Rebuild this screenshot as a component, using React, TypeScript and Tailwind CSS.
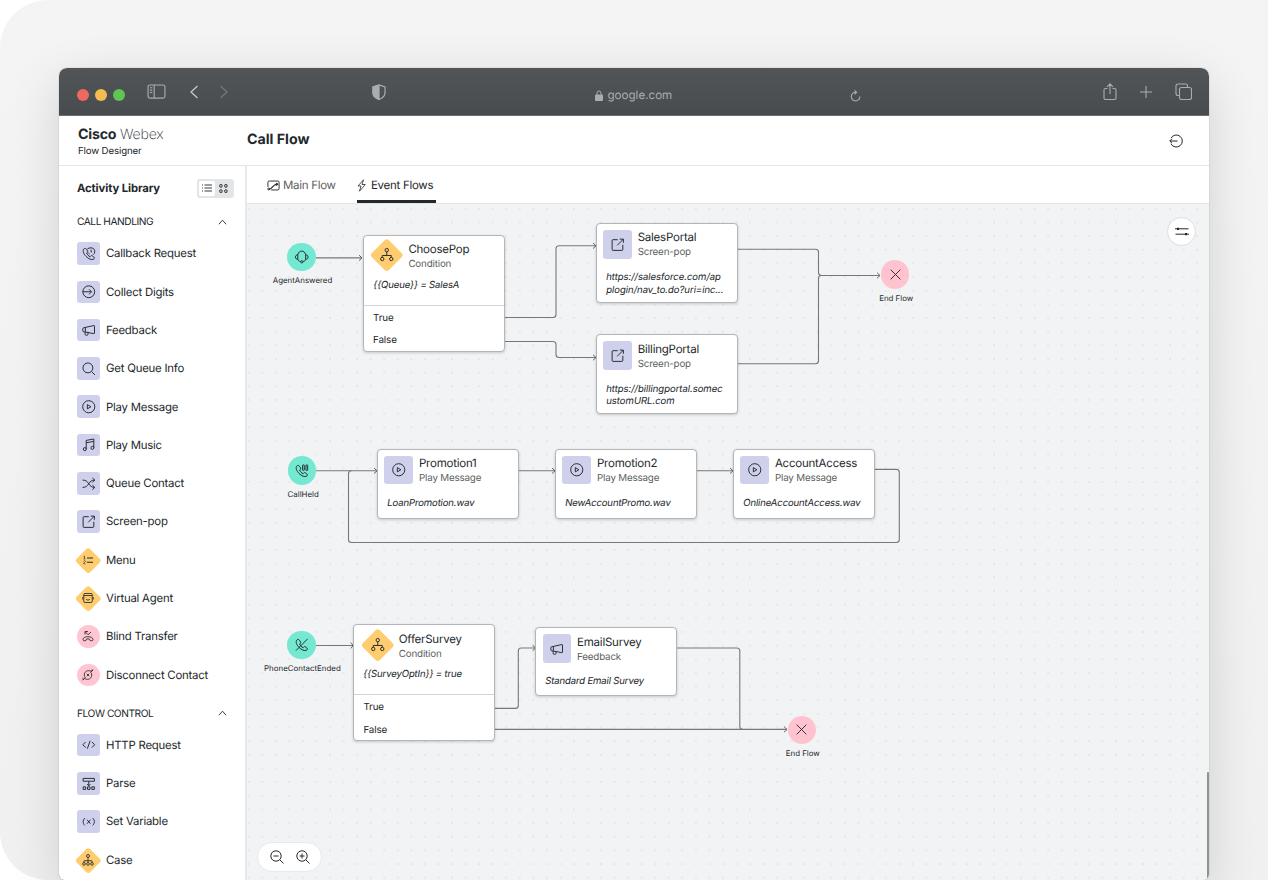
import type { ReactNode } from "react";
import clsx from "clsx";

type Tone = "lavender" | "amber" | "rose" | "mint";

const handset =
  "M3.2 3.6C.8 6.5 2.6 12 7 16.6c4.5 4.6 10 6.8 13.2 5.2 2.2-1.1 2.4-2.9 1-4l-2.7-2c-1.2-.9-2.5-.6-3.3.5l-.7 1c-2.8-1.2-5.1-3.6-6.2-6.5l1-.8c1-.8 1.2-2 .5-3.1L8 4C6.8 2.3 4.8 1.9 3.2 3.6z";

const icons: Record<string, ReactNode> = {
  callback: (
    <>
      <path d={handset} />
      <path d="M9.5 3.5C13 .6 19 .8 21.5 4c2 3 1.6 7.5-1.5 9.5M13.5 12.5c-1.2-.6-2-1.3-2.6-2.5M16 4.8v3.4l2 1" />
    </>
  ),
  digits: (
    <>
      <circle cx="12" cy="12" r="10.5" />
      <path d="M1.5 12H16.5M12.5 7.5l4.5 4.5-4.5 4.5" />
    </>
  ),
  feedback: (
    <path d="M3 8.5 21 4.5a1 1 0 0 1 1.2 1v12.4a1 1 0 0 1-1.2 1L3 15.5a1.5 1.5 0 0 1-1.5-1.5v-4A1.5 1.5 0 0 1 3 8.5zM5.5 16v3.2a2.6 2.6 0 0 0 5.2.5V17M6 8v7.5" />
  ),
  search: (
    <>
      <circle cx="10.5" cy="10.5" r="8.8" />
      <path d="m17 17 6 6" />
    </>
  ),
  play: (
    <>
      <circle cx="12" cy="12" r="10.8" />
      <path d="M9.5 8.2v7.6l6.3-3.8z" />
    </>
  ),
  music: (
    <>
      <path d="M7.5 19.5V4.2L21 1.8v15.4M7.5 8.5 21 6" />
      <ellipse cx="5" cy="19.8" rx="2.6" ry="2.8" />
      <ellipse cx="18.5" cy="17.5" rx="2.6" ry="2.8" />
    </>
  ),
  shuffle: (
    <path d="M1 5.5c6 0 8.5 2.5 11 6.5s5 6.5 10.5 6.5M1 18.5c6 0 8.5-2.5 11-6.5s5-6.5 10.5-6.5M18.5 1.5l4.3 4-4.3 4M18.5 14.5l4.3 4-4.3 4" />
  ),
  popout: (
    <path d="M12 3H3.5A1.5 1.5 0 0 0 2 4.5v16A1.5 1.5 0 0 0 3.5 22h16a1.5 1.5 0 0 0 1.5-1.5V12M11 13 22 2M15.5 2H22v6.5" />
  ),
  menu: (
    <>
      <path d="M10 8h12M10 16.5h12" strokeWidth="2.2" />
      <path d="M3 5.5 5 4v6M3 10h4M3 15c.5-2 4-2 4 0 0 1.5-4 2.5-4 4.5h4" strokeWidth="1.2" />
    </>
  ),
  bot: (
    <>
      <rect x="3.5" y="3" width="17" height="18" rx="2.5" />
      <path d="M3.5 7H20.5M1.5 10v5M22.5 10v5M8 14c1.5 3 6.5 3 8 0M8 10.5v.8M16 10.5v.8" />
    </>
  ),
  transfer: (
    <>
      <path d="M6 9V3h6M6.5 3.5l5.5 6 6-5.5" />
      <path d="M2 19.5c0-5 5-6 10-6s10 1 10 6c0 1.2-1 2-2.2 2h-2.5c-1.3 0-2-.8-2-2v-1.3c-2-.6-4.6-.6-6.6 0v1.3c0 1.2-.7 2-2 2H4.2c-1.2 0-2.2-.8-2.2-2z" />
    </>
  ),
  disconnect: (
    <>
      <path d="M18 4.5C12 1.5 4.5 4.5 4.5 12c0 2 .5 3.5 1.5 5M6 19.5C12 22.5 19.5 19.5 19.5 12c0-2-.5-3.5-1.5-5" />
      <path d="M22.5 1.5 17 7M1.5 22.5 7 17M9.5 9.5l5 5M14.5 9.5l-5 5M18 2.5h4M2 17.5v4" />
    </>
  ),
  code: <path d="M6.5 7 1.5 12l5 5M17.5 7l5 5-5 5M14.5 5l-5 14" />,
  parse: (
    <>
      <rect x="2" y="2.5" width="20" height="5" />
      <path d="M12 7.5v8M9 12.5l3 3 3-3" />
      <rect x="2" y="17.5" width="4.5" height="4.5" />
      <rect x="9.8" y="17.5" width="4.5" height="4.5" />
      <rect x="17.5" y="17.5" width="4.5" height="4.5" />
    </>
  ),
  variable: (
    <path d="M5 5.5c-4 3.8-4 9.2 0 13M19 5.5c4 3.8 4 9.2 0 13M9 8.5l6 7M15 8.5l-6 7" />
  ),
  caseTree: (
    <>
      <circle cx="12" cy="4" r="3" />
      <path d="M12 7v10M4 17v-3.5h16V17" />
      <circle cx="4" cy="19.8" r="2.7" />
      <circle cx="12" cy="19.8" r="2.7" />
      <circle cx="20" cy="19.8" r="2.7" />
    </>
  ),
  condition: (
    <>
      <circle cx="12" cy="3.8" r="3" />
      <path d="M12 6.8v6.5M4 16.5v-3.2h16v3.2" />
      <circle cx="4" cy="19.5" r="3" />
      <circle cx="20" cy="19.5" r="3" />
    </>
  ),
  headset: (
    <>
      <path d="M5 8.5C6 4 8.5 2 12 2s6 2 7 6.5M5 8.5v8C2.5 16.5.8 15 .8 12.5S2.5 8.5 5 8.5M19 8.5v8c2.5 0 4.2-1.5 4.2-4s-1.7-4-4.2-4M5 16.5c.5 2 2 3.5 4.5 4M19 16.5c-.5 2-2 3.5-4.5 4" />
      <circle cx="12" cy="21" r="2" />
    </>
  ),
  held: (
    <>
      <path d={handset} />
      <rect x="13.5" y="1.5" width="3" height="10" rx="1" />
      <rect x="19.5" y="1.5" width="3" height="10" rx="1" />
    </>
  ),
  ended: (
    <>
      <path d={handset} />
      <path d="M22.5 1.5 1.5 22.5" />
    </>
  ),
  close: <path d="m3 3 18 18M21 3 3 21" />,
};

function Icon({ name, className }: { name: string; className?: string }) {
  return (
    <svg
      viewBox="0 0 24 24"
      fill="none"
      stroke="currentColor"
      strokeWidth="1.7"
      strokeLinejoin="round"
      overflow="visible"
      className={clsx("relative shrink-0", className)}
    >
      {icons[name]}
    </svg>
  );
}

interface Activity {
  label: string;
  icon: string;
  tone: Tone;
}

const callHandling: Activity[] = [
  { label: "Callback Request", icon: "callback", tone: "lavender" },
  { label: "Collect Digits", icon: "digits", tone: "lavender" },
  { label: "Feedback", icon: "feedback", tone: "lavender" },
  { label: "Get Queue Info", icon: "search", tone: "lavender" },
  { label: "Play Message", icon: "play", tone: "lavender" },
  { label: "Play Music", icon: "music", tone: "lavender" },
  { label: "Queue Contact", icon: "shuffle", tone: "lavender" },
  { label: "Screen-pop", icon: "popout", tone: "lavender" },
  { label: "Menu", icon: "menu", tone: "amber" },
  { label: "Virtual Agent", icon: "bot", tone: "amber" },
  { label: "Blind Transfer", icon: "transfer", tone: "rose" },
  { label: "Disconnect Contact", icon: "disconnect", tone: "rose" },
];

const flowControl: Activity[] = [
  { label: "HTTP Request", icon: "code", tone: "lavender" },
  { label: "Parse", icon: "parse", tone: "lavender" },
  { label: "Set Variable", icon: "variable", tone: "lavender" },
  { label: "Case", icon: "caseTree", tone: "amber" },
];

function ActivityBadge({ icon, tone }: { icon: string; tone: Tone }) {
  return (
    <span
      className={clsx(
        "grid size-[22.5px] shrink-0 place-items-center",
        tone === "lavender" && "rounded-[3px] bg-[#cfd1ec]",
        tone === "rose" && "rounded-full bg-[#ffc6d2]",
      )}
    >
      {tone === "amber" && (
        <span className="col-start-1 row-start-1 size-[18.5px] rotate-45 rounded-[3px] bg-[#ffcd70]" />
      )}
      <Icon
        name={icon}
        className={clsx(
          "col-start-1 row-start-1",
          tone === "lavender" ? "size-[13.5px]" : "size-[12px]",
        )}
      />
    </span>
  );
}

function ActivityGroup({ title, items }: { title: string; items: Activity[] }) {
  return (
    <section className="mb-[6.2px]">
      <div className="flex h-[25.7px] items-center justify-between pr-[18px]">
        <h3 className="pt-[2.5px] text-[10.2px] tracking-[-0.045em]">{title}</h3>
        <svg viewBox="0 0 10 6" className="h-[6px] w-[9px]" fill="none" stroke="currentColor">
          <path d="m1 5.5 4-4.5 4 4.5" />
        </svg>
      </div>
      <ul>
        {items.map((item) => (
          <li key={item.label} className="flex h-[38.3px] items-center gap-[6.5px]">
            <ActivityBadge icon={item.icon} tone={item.tone} />
            <span className="pt-[0.8px] text-[11.4px] tracking-[-0.02em]">{item.label}</span>
          </li>
        ))}
      </ul>
    </section>
  );
}

function BrowserBar() {
  return (
    <div className="flex h-[48px] shrink-0 items-center rounded-t-[8px] border-b border-[#6b6e70] bg-linear-to-b from-[#515557] to-[#484c4e] pl-[18px] text-[#a9adb3]">
      <div className="flex gap-[6.5px] pt-[7px]">
        <span className="h-[12.5px] w-[11.5px] rounded-full bg-[#ee6a5f]" />
        <span className="h-[12.5px] w-[11.5px] rounded-full bg-[#f5bd4f]" />
        <span className="h-[12.5px] w-[11.5px] rounded-full bg-[#61c454]" />
      </div>
      <svg viewBox="0 0 20 16" className="ml-[22px] h-[15px] w-[19px]" fill="none" stroke="currentColor" strokeWidth="1.2">
        <rect x="1" y="1" width="18" height="14" rx="2" />
        <path d="M7.5 1v14M3 4h2.5M3 6.5h2.5M3 9h2.5" />
      </svg>
      <svg viewBox="0 0 8 14" className="ml-[24px] h-[14px] w-[8px]" fill="none" stroke="#c3c6ca" strokeWidth="1.3">
        <path d="M7.5 1 1 7l6.5 6" />
      </svg>
      <svg viewBox="0 0 8 14" className="ml-[22px] h-[14px] w-[8px]" fill="none" stroke="#74787b" strokeWidth="1.2">
        <path d="M.5 1 7 7 .5 13" />
      </svg>
      <svg viewBox="0 0 14 16" className="ml-[144px] h-[16px] w-[14px]" fill="none" stroke="currentColor" strokeWidth="1.2">
        <path d="M7 1 1 3v6c0 3 2.5 5 6 6.5C10.5 14 13 12 13 9V3z" />
        <path d="M7 1 1 3v6c0 3 2.5 5 6 6.5z" fill="currentColor" />
      </svg>
      <div className="ml-[209px] flex items-center gap-[5px] pt-[8px]">
        <svg viewBox="0 0 8 11" className="h-[11px] w-[8px]" fill="currentColor">
          <rect x="0" y="4.5" width="8" height="6.5" rx="1" />
          <path d="M2 5V3a2 2 0 0 1 4 0v2" fill="none" stroke="currentColor" />
        </svg>
        <span className="w-[237px] text-[11.6px] leading-[15px]">google.com</span>
        <svg viewBox="0 0 12 13" className="h-[12px] w-[11px]" fill="none" stroke="currentColor" strokeWidth="1.2">
          <path d="M6.5 2.5A4.7 4.7 0 1 0 10.8 7M5 .5l2.2 2L5 4.8" />
        </svg>
      </div>
      <div className="ml-auto flex items-center gap-[23px] pr-[17px]">
        <svg viewBox="0 0 14 17" className="h-[17px] w-[14px]" fill="none" stroke="currentColor" strokeWidth="1.1">
          <path d="M4.5 5.5H2.5A1.5 1.5 0 0 0 1 7v8a1.5 1.5 0 0 0 1.5 1.5h9A1.5 1.5 0 0 0 13 15V7a1.5 1.5 0 0 0-1.5-1.5h-2M7 11V1M4 3.8l3-3 3 3" />
        </svg>
        <svg viewBox="0 0 12 12" className="size-[12px]" fill="none" stroke="currentColor" strokeWidth="1.1">
          <path d="M6 0v12M0 6h12" />
        </svg>
        <svg viewBox="0 0 17 17" className="size-[17px]" fill="none" stroke="currentColor" strokeWidth="1.1">
          <rect x="4.5" y="4.5" width="12" height="12" rx="2" />
          <path d="M4.5 12.5H3a2 2 0 0 1-2-2V3a2 2 0 0 1 2-2h7.5a2 2 0 0 1 2 2v1.5" />
        </svg>
      </div>
    </div>
  );
}

function AppHeader() {
  return (
    <header className="flex h-[50px] shrink-0 items-center border-b border-[#e4e5e7]">
      <div className="w-[188px] pl-[19px] pt-[4px]">
        <p className="text-[14.2px] leading-[17px] tracking-[-0.015em]">
          <span className="font-bold">Cisco</span> <span className="font-extralight">Webex</span>
        </p>
        <p className="text-[9.7px] leading-[17px] tracking-[-0.015em]">Flow Designer</p>
      </div>
      <h1 className="pb-[1px] text-[14.2px] font-bold">Call Flow</h1>
      <svg viewBox="0 0 14 14" className="ml-auto mr-[26px] size-[14px]" fill="none" stroke="currentColor">
        <path d="M2 4.2a6 6 0 1 1 0 5.6M.8 7H8.5M3 4.8.8 7 3 9.2" />
      </svg>
    </header>
  );
}

function Sidebar() {
  return (
    <aside className="h-full w-[188px] shrink-0 overflow-hidden border-r-2 border-[#e8e9eb] pl-[18px]">
      <div className="mb-[2.7px] flex h-[40px] items-center justify-between pr-[11px] pt-[4px]">
        <h2 className="text-[11.3px] font-bold tracking-[-0.01em]">Activity Library</h2>
        <div className="flex h-[19px] w-[37px] items-center rounded-[3px] bg-[#e4e5e7] p-[2px]">
          <span className="grid h-[15px] w-[16px] place-items-center rounded-[2px] bg-white">
            <svg viewBox="0 0 10 8" className="h-[8px] w-[10px]" stroke="currentColor" strokeWidth=".9">
              <path d="M0 1h1M2.5 1H10M0 4h1M2.5 4H10M0 7h1M2.5 7H10" />
            </svg>
          </span>
          <span className="grid flex-1 place-items-center">
            <svg viewBox="0 0 9 9" className="size-[9px]" fill="none" stroke="currentColor">
              <rect x=".8" y=".5" width="2.2" height="2.7" rx=".6" />
              <rect x="5.8" y=".5" width="2.2" height="2.7" rx=".6" />
              <rect x=".8" y="5.8" width="2.2" height="2.7" rx=".6" />
              <rect x="5.8" y="5.8" width="2.2" height="2.7" rx=".6" />
            </svg>
          </span>
        </div>
      </div>
      <ActivityGroup title="CALL HANDLING" items={callHandling} />
      <ActivityGroup title="FLOW CONTROL" items={flowControl} />
    </aside>
  );
}

function Tabs() {
  return (
    <nav className="flex h-[38px] shrink-0 gap-[21px] border-b border-[#e4e5e7] pl-[20px] text-[11.5px] tracking-[-0.025em]">
      <span className="flex w-[69px] items-center gap-[3px] whitespace-nowrap pt-[2px] text-[#5c5f61]">
        <svg viewBox="0 0 14 11" className="h-[11px] w-[13px] shrink-0 text-[#23282b]" fill="none" stroke="currentColor">
          <path d="M1 7V2a1.3 1.3 0 0 1 1.3-1.3h9.4A1.3 1.3 0 0 1 13 2v7a1.3 1.3 0 0 1-1.3 1.3H4.5" />
          <path d="M2 9.5C6 9.5 5.5 4.5 11 4.2" strokeWidth="1.2" />
          <circle cx="1.8" cy="9.3" r="1" />
          <circle cx="10.5" cy="4.2" r="1" fill="currentColor" />
        </svg>
        Main Flow
      </span>
      <span className="flex w-[79px] items-center gap-[5px] border-b-[3px] border-[#23282b] pt-[5px]">
        <svg viewBox="0 0 9 13" className="h-[13px] w-[9px] shrink-0" fill="none" stroke="currentColor" strokeWidth=".8">
          <path d="M6.5.8 1 7h3l-1.5 5.2L8.3 5.5H5z" />
        </svg>
        <span className="whitespace-nowrap">Event Flows</span>
      </span>
    </nav>
  );
}

// Canvas is panned: node and edge coordinates are in world units
const view = { x: 247, y: 204, width: 962, height: 676 };

interface FlowNode {
  x: number;
  y: number;
  height: number;
  title: string;
  kind: string;
  icon: string;
  lines: string[];
  branches?: string[];
}

const nodes: FlowNode[] = [
  { x: 363, y: 235, height: 117, title: "ChoosePop", kind: "Condition", icon: "condition", lines: ["{{Queue}} = SalesA"], branches: ["True", "False"] },
  { x: 596, y: 223, height: 80, title: "SalesPortal", kind: "Screen-pop", icon: "popout", lines: ["https://salesforce.com/ap", "plogin/nav_to.do?uri=inc..."] },
  { x: 596, y: 334.4, height: 80, title: "BillingPortal", kind: "Screen-pop", icon: "popout", lines: ["https://billingportal.somec", "ustomURL.com"] },
  { x: 377.3, y: 448.5, height: 70.5, title: "Promotion1", kind: "Play Message", icon: "play", lines: ["LoanPromotion.wav"] },
  { x: 555.3, y: 448.5, height: 70.5, title: "Promotion2", kind: "Play Message", icon: "play", lines: ["NewAccountPromo.wav"] },
  { x: 733.2, y: 448.5, height: 70.5, title: "AccountAccess", kind: "Play Message", icon: "play", lines: ["OnlineAccountAccess.wav"] },
  { x: 353.4, y: 624.3, height: 117, title: "OfferSurvey", kind: "Condition", icon: "condition", lines: ["{{SurveyOptIn}} = true"], branches: ["True", "False"] },
  { x: 535.4, y: 627.3, height: 69, title: "EmailSurvey", kind: "Feedback", icon: "feedback", lines: ["Standard Email Survey"] },
];

const markers: { x: number; y: number; label: string; icon: string; tone: Tone }[] = [
  { x: 301.5, y: 257, label: "AgentAnswered", icon: "headset", tone: "mint" },
  { x: 302.2, y: 470.7, label: "CallHeld", icon: "held", tone: "mint" },
  { x: 301.4, y: 644.8, label: "PhoneContactEnded", icon: "ended", tone: "mint" },
  { x: 895.2, y: 274.7, label: "End Flow", icon: "close", tone: "rose" },
  { x: 801.8, y: 730, label: "End Flow", icon: "close", tone: "rose" },
];

const edges = [
  { d: "M316 257.9H362", arrow: true },
  { d: "M505 317.5H553q3 0 3-3V248.8q0-3 3-3H596", arrow: true },
  { d: "M505 341.5H553q3 0 3 3V354.5q0 3 3 3H596", arrow: true },
  { d: "M738 249.3H815.5q3 0 3 3V272.5q0 3 3 3H880", arrow: true },
  { d: "M738 363.7H815.5q3 0 3-3V278.5q0-3 3-3", arrow: false },
  { d: "M316 470.8H377", arrow: true },
  { d: "M519 470.8H555", arrow: true },
  { d: "M697 470.8H733", arrow: true },
  { d: "M875 469.4H896.3q3 0 3 3V539.5q0 3-3 3H351.5q-3 0-3-3V473.8q0-3 3-3", arrow: false },
  { d: "M316 645.5H353.5", arrow: true },
  { d: "M495 708.4H515.3q3 0 3-3V651q0-3 3-3H535.5", arrow: true },
  { d: "M495 729.4H787", arrow: true },
  { d: "M677 648H736.8q3 0 3 3V726.4q0 3 3 3", arrow: false },
];

function NodeCard({ node }: { node: FlowNode }) {
  return (
    <article
      className="absolute w-[142px] rounded-[4px] border border-[#b3b5b8] bg-white shadow-[0_1px_3px_rgba(0,0,0,0.18)]"
      style={{ left: node.x - view.x, top: node.y - view.y, height: node.height }}
    >
      <div className="flex h-[35px] items-start pl-[6.2px] pt-[6px]">
        {node.branches ? (
          <span className="ml-[0.8px] mr-[5.4px] grid size-[32px] -translate-y-[3px] place-items-center">
            <span className="col-start-1 row-start-1 size-[23.5px] rotate-45 rounded-[3px] bg-[#ffcd70]" />
            <Icon name={node.icon} className="col-start-1 row-start-1 size-[13.5px]" />
          </span>
        ) : (
          <span className="mr-[6px] grid size-[28.5px] place-items-center rounded-[3px] bg-[#cfd1ec]">
            <Icon name={node.icon} className="size-[13.5px]" />
          </span>
        )}
        <div className="pt-[0.4px]">
          <h4 className="text-[11.5px] leading-[15px] tracking-[-0.02em]">{node.title}</h4>
          <p className="text-[9.8px] leading-[16.4px] tracking-[-0.018em] text-[#5c5f61]">{node.kind}</p>
        </div>
      </div>
      <div
        className={clsx(
          "whitespace-nowrap pl-[9px] text-[9.7px] leading-[12.9px]",
          node.branches ? "mt-[8.5px]" : "mt-[13.2px]",
          node.lines.length > 1 ? "tracking-[-0.012em]" : "tracking-[-0.022em]",
        )}
      >
        {node.lines.map((line) => (
          <p key={line} className="-skew-x-[9deg]">
            {line}
          </p>
        ))}
      </div>
      {node.branches && (
        <div className="mt-[12.6px] border-t border-[#d3d5d7] pl-[9px] text-[9.8px] tracking-[-0.01em]">
          {node.branches.map((branch) => (
            <p key={branch} className="h-[22.3px] leading-[26px]">
              {branch}
            </p>
          ))}
        </div>
      )}
    </article>
  );
}

function Canvas() {
  return (
    <main className="relative min-h-0 flex-1 overflow-hidden bg-[#f2f3f5]">
      <svg
        viewBox={`${view.x} ${view.y} ${view.width} ${view.height}`}
        width={view.width}
        height={view.height}
        className="absolute left-0 top-0"
        fill="none"
      >
        <defs>
          <pattern id="dots" x="255.5" y="202" width="13.55" height="13.65" patternUnits="userSpaceOnUse">
            <circle cx="6.8" cy="6.8" r=".7" fill="#cfd1d4" />
          </pattern>
          <marker id="arrow" viewBox="0 0 6 8" refX="5" refY="4" markerWidth="6" markerHeight="8" markerUnits="userSpaceOnUse" orient="auto">
            <path d="m2 1.2 3 2.8-3 2.8" stroke="#636668" fill="none" />
          </marker>
        </defs>
        <rect x={view.x} y={view.y} width="958" height={view.height} fill="url(#dots)" />
        {edges.map((edge) => (
          <path key={edge.d} d={edge.d} stroke="#75787b" strokeWidth="1.1" markerEnd={edge.arrow ? "url(#arrow)" : undefined} />
        ))}
      </svg>

      {nodes.map((node) => (
        <NodeCard key={node.title} node={node} />
      ))}

      {markers.map((marker) => (
        <div
          key={`${marker.label}-${marker.x}`}
          className="absolute flex w-[100px] -translate-x-1/2 flex-col items-center"
          style={{ left: marker.x - view.x, top: marker.y - view.y - 14.3 }}
        >
          <span
            className={clsx(
              "grid size-[28.6px] place-items-center rounded-full",
              marker.tone === "mint" ? "bg-[#74e8d1]" : "bg-[#ffc3d0]",
            )}
          >
            <Icon name={marker.icon} className={marker.icon === "close" ? "size-[13px]" : "size-[13.5px]"} />
          </span>
          <span className="ml-[2px] mt-[3px] text-[7.9px] leading-[12px]">{marker.label}</span>
        </div>
      ))}

      <button type="button" className="absolute right-[13px] top-[13px] grid size-[29px] place-items-center rounded-full border border-[#dcdee0] bg-white">
        <svg viewBox="0 0 14 9" className="h-[9px] w-[14px]" fill="none" stroke="currentColor">
          <path d="M0 1.8h13.5M.5 7.2H14" />
          <path d="M2 1.8h2M10 7.2h2" strokeWidth="2.2" />
        </svg>
      </button>

      <div className="absolute bottom-[8px] left-[10px] flex h-[30px] w-[65px] items-center justify-center gap-[12px] rounded-full border border-[#e8e9eb] bg-white">
        <svg viewBox="0 0 14 14" className="size-[14px]" fill="none" stroke="currentColor">
          <circle cx="6" cy="6" r="5.2" />
          <path d="m9.8 9.8 3.7 3.7M3.5 6h5" />
        </svg>
        <svg viewBox="0 0 14 14" className="size-[14px]" fill="none" stroke="currentColor">
          <circle cx="6" cy="6" r="5.2" />
          <path d="m9.8 9.8 3.7 3.7M3.5 6h5M6 3.5v5" />
        </svg>
      </div>

      <span className="absolute bottom-0 right-0 h-[108px] w-[2px] rounded-full bg-[#8f9193]" />
    </main>
  );
}

export default function App() {
  return (
    <div className="h-[880px] w-[1268px] overflow-hidden bg-white font-['Inter',sans-serif] text-[#23282b] [text-rendering:geometricPrecision]">
      <div className="h-full rounded-l-[48px] bg-linear-to-b from-[#f4f4f4] to-[#f0f0f0] pl-[59px] pt-[68px]">
        <div className="flex h-[812px] w-[1150px] flex-col overflow-hidden rounded-b-[6px] rounded-t-[8px] bg-white shadow-[0_14px_50px_rgba(0,0,0,0.14),0_0_1px_rgba(0,0,0,0.5)]">
          <BrowserBar />
          <AppHeader />
          <div className="flex min-h-0 flex-1">
            <Sidebar />
            <div className="flex min-w-0 flex-1 flex-col">
              <Tabs />
              <Canvas />
            </div>
          </div>
        </div>
      </div>
    </div>
  );
}
